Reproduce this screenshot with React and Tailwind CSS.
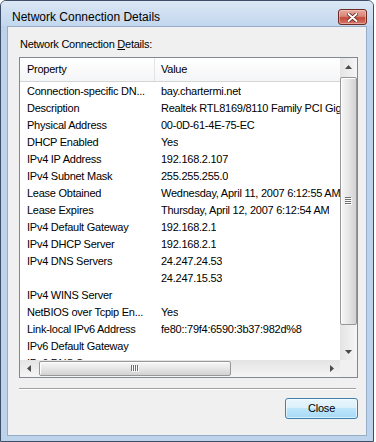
import React from "react";

const rows = [
  ["Connection-specific DN...", "bay.chartermi.net"],
  ["Description", "Realtek RTL8169/8110 Family PCI Gigabit Ethernet NIC (NDIS 6.0)"],
  ["Physical Address", "00-0D-61-4E-75-EC"],
  ["DHCP Enabled", "Yes"],
  ["IPv4 IP Address", "192.168.2.107"],
  ["IPv4 Subnet Mask", "255.255.255.0"],
  ["Lease Obtained", "Wednesday, April 11, 2007 6:12:55 AM"],
  ["Lease Expires", "Thursday, April 12, 2007 6:12:54 AM"],
  ["IPv4 Default Gateway", "192.168.2.1"],
  ["IPv4 DHCP Server", "192.168.2.1"],
  ["IPv4 DNS Servers", "24.247.24.53"],
  ["", "24.247.15.53"],
  ["IPv4 WINS Server", ""],
  ["NetBIOS over Tcpip En...", "Yes"],
  ["Link-local IPv6 Address", "fe80::79f4:6590:3b37:982d%8"],
  ["IPv6 Default Gateway", ""],
  ["IPv6 DNS Server", ""],
];

function Arrow({ dir }) {
  const d = {
    up: "M3.5 0 L7 4 L0 4 Z",
    down: "M0 0 L7 0 L3.5 4 Z",
    left: "M4 0 L4 7 L0 3.5 Z",
    right: "M0 0 L4 3.5 L0 7 Z",
  }[dir];
  const w = dir === "up" || dir === "down" ? 7 : 4;
  const h = dir === "up" || dir === "down" ? 4 : 7;
  return (
    <svg width={w} height={h} viewBox={`0 0 ${w} ${h}`}>
      <path d={d} fill="#4a4a4a" />
    </svg>
  );
}

function VGrip() {
  return (
    <svg width="7" height="8" viewBox="0 0 7 8">
      {[0, 2, 4, 6].map((y) => (
        <g key={y}>
          <rect x="0" y={y} width="6" height="1" fill="#6e6e6e" />
          <rect x="1" y={y + 1} width="6" height="1" fill="#ffffff" />
        </g>
      ))}
    </svg>
  );
}

function HGrip() {
  return (
    <svg width="8" height="7" viewBox="0 0 8 7">
      {[0, 2, 4, 6].map((x) => (
        <g key={x}>
          <rect x={x} y="0" width="1" height="6" fill="#6e6e6e" />
          <rect x={x + 1} y="1" width="1" height="6" fill="#ffffff" />
        </g>
      ))}
    </svg>
  );
}

export default function App() {
  return (
    <div className="w-[376px] h-[442px] bg-white font-['Liberation_Sans',Arial,sans-serif] text-black">
      <div className="w-[374px] h-[442px] rounded-t-[6px] border border-[#3c4f66] bg-[#bcd3eb] flex flex-col overflow-hidden">
        {/* Title bar */}
        <div className="h-[25px] flex items-start justify-between bg-[linear-gradient(to_bottom,#dbe7f4,#c2d7ee)]">
          <div className="pl-[11px] pt-[9px] text-[12px] leading-[14px]">Network Connection Details</div>
          <div className="mt-[8px] mr-[6px] w-[29px] h-[16px] rounded-[3px] border border-[#6b2a22] bg-[linear-gradient(to_bottom,#e8aba1_0%,#d98676_45%,#c4493a_55%,#d3786a_100%)] shadow-[inset_0_0_0_1px_rgba(255,210,200,0.5)] flex items-center justify-center">
            <svg width="11" height="9" viewBox="0 0 11 9">
              <path d="M1.5 1 L9.5 8 M9.5 1 L1.5 8" stroke="#5a1f18" strokeWidth="3.6" strokeLinecap="round" />
              <path d="M1.5 1 L9.5 8 M9.5 1 L1.5 8" stroke="#ffffff" strokeWidth="2" strokeLinecap="round" />
            </svg>
          </div>
        </div>

        {/* Content */}
        <div className="flex-1 mx-[6px] mb-[5px] border border-[#97adc6] bg-[#f0f0f0] flex flex-col pl-[11px] pr-[8px] pt-[10px] text-[11px] tracking-[-0.25px]">
          <div className="h-[14px] leading-[14px] ml-[1px]">
            Network Connection <span className="underline underline-offset-[1px]">D</span>etails:
          </div>

          {/* List box */}
          <div className="mt-[6px] h-[321px] border border-[#828790] bg-white flex flex-col">
            <div className="flex h-[302px]">
              <div className="w-[320px] overflow-hidden">
                <div className="h-[24px] flex border-b border-[#d5d5d5] bg-[linear-gradient(to_bottom,#ffffff,#f4f5f7)]">
                  <div className="w-[135px] shrink-0 pl-[7px] border-r border-[#e3e3e3] flex items-center">Property</div>
                  <div className="pl-[6px] flex items-center">Value</div>
                </div>
                <div className="mt-px">
                  {rows.map(([p, v], i) => (
                    <div key={i} className="h-[17px] leading-[17px] flex whitespace-nowrap">
                      <div className="w-[135px] shrink-0 pl-[7px] overflow-hidden">{p}</div>
                      <div className="pl-[6px] overflow-hidden">{v}</div>
                    </div>
                  ))}
                </div>
              </div>
              {/* Vertical scrollbar */}
              <div className="w-[17px] flex flex-col bg-[linear-gradient(to_right,#e4e4e4,#f5f5f5)]">
                <div className="h-[17px] flex items-center justify-center">
                  <Arrow dir="up" />
                </div>
                <div className="mt-[2px] h-[248px] rounded-[2px] border border-[#979797] bg-[linear-gradient(to_right,#f7f7f7,#e6e6e6_50%,#d2d2d2)] shadow-[inset_1px_1px_0_#ffffff] flex items-center justify-center">
                  <VGrip />
                </div>
                <div className="flex-1" />
                <div className="h-[17px] flex items-center justify-center">
                  <Arrow dir="down" />
                </div>
              </div>
            </div>
            {/* Horizontal scrollbar */}
            <div className="flex h-[17px]">
              <div className="w-[320px] flex items-center bg-[linear-gradient(to_bottom,#e4e4e4,#f5f5f5)]">
                <div className="w-[17px] h-[17px] flex items-center justify-center">
                  <Arrow dir="left" />
                </div>
                <div className="ml-[2px] w-[192px] h-[15px] rounded-[2px] border border-[#979797] bg-[linear-gradient(to_bottom,#f7f7f7,#e6e6e6_50%,#d2d2d2)] shadow-[inset_1px_1px_0_#ffffff] flex items-center justify-center">
                  <HGrip />
                </div>
                <div className="flex-1" />
                <div className="w-[17px] h-[17px] flex items-center justify-center">
                  <Arrow dir="right" />
                </div>
              </div>
              <div className="w-[17px] bg-[#f0f0f0]" />
            </div>
          </div>

          {/* Separator */}
          <div className="mt-[10px] mr-[2px] h-px bg-[#a0a0a0]" />
          <div className="mr-[2px] h-px bg-white" />

          {/* Close button */}
          <button className="self-end mt-[8px] w-[73px] h-[21px] rounded-[3px] border border-[#3c7fb1] bg-[linear-gradient(to_bottom,#eaf6fd_0%,#d9f0fc_50%,#bee6fd_50%,#a7d9f5_100%)] shadow-[inset_0_0_0_1px_rgba(255,255,255,0.6)] text-[11px] tracking-[-0.2px] leading-[19px]">
            Close
          </button>
        </div>
      </div>
    </div>
  );
}
